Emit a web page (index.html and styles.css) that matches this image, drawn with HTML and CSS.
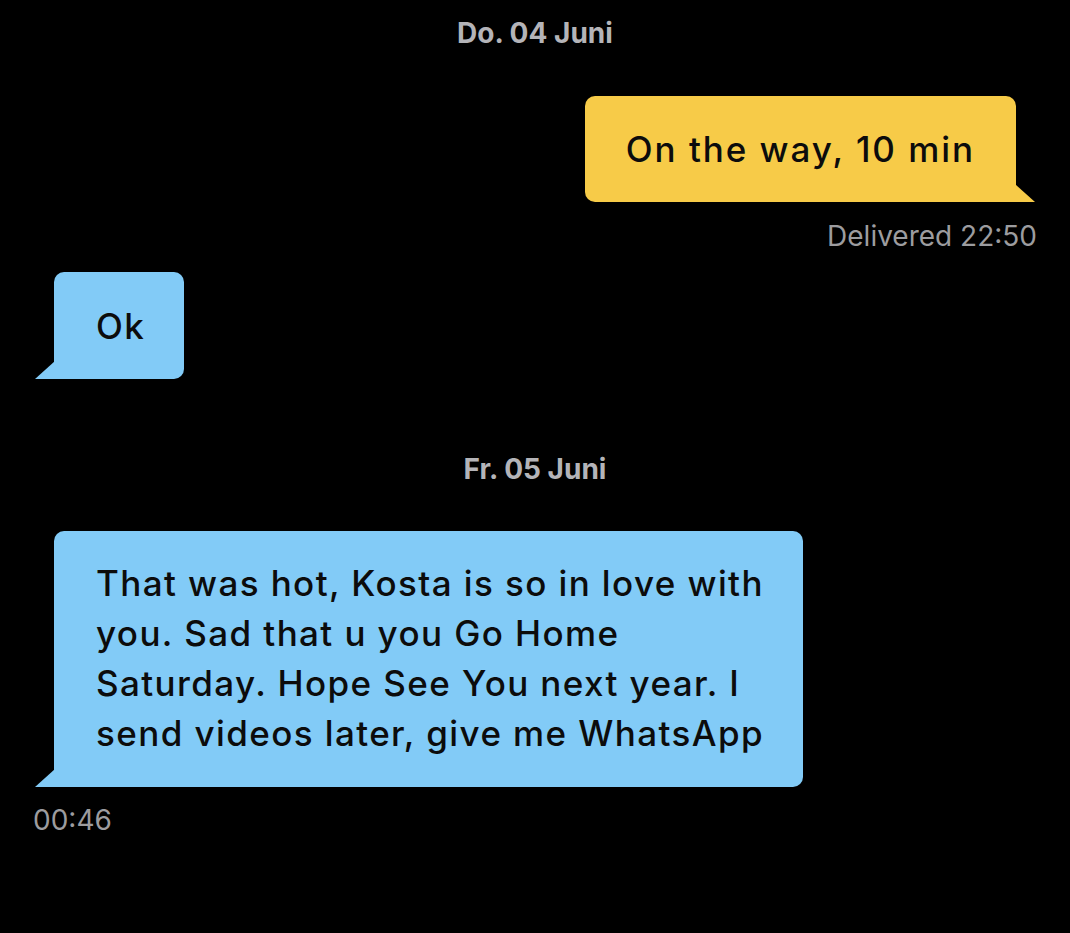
FILE: index.html
```html
<!DOCTYPE html>
<html lang="de">
<head>
<meta charset="utf-8">
<title>Chat</title>
<link rel="stylesheet" href="styles.css">
</head>
<body>
<main class="chat">
  <div class="day">Do. 04 Juni</div>

  <div class="msg msg-out">
    <div class="bubble bubble-out">On the way, 10 min</div>
    <div class="meta meta-out">Delivered 22:50</div>
  </div>

  <div class="msg msg-in">
    <div class="bubble bubble-in bubble-short">Ok</div>
  </div>

  <div class="day day-second">Fr. 05 Juni</div>

  <div class="msg msg-in">
    <div class="bubble bubble-in bubble-long">That was hot, Kosta is so in love with<br>you. Sad that u you Go Home<br>Saturday. Hope See You next year. I<br>send videos later, give me WhatsApp</div>
    <div class="meta meta-in">00:46</div>
  </div>
</main>
</body>
</html>
```

FILE: styles.css
```css
html, body {
  margin: 0;
  padding: 0;
  background: #000;
}

body {
  width: 1070px;
  height: 933px;
  overflow: hidden;
  font-family: "Inter", "Open Sans", "DejaVu Sans", sans-serif;
  color: #0c0c0c;
}

.chat {
  display: flex;
  flex-direction: column;
  padding: 16px 0 0;
}

.day {
  align-self: center;
  color: #b4b4b8;
  font-weight: 700;
  font-size: 28px;
  line-height: 34px;
}

.day-second {
  margin-top: 73px;
}

.msg {
  display: flex;
  flex-direction: column;
}

.msg-out {
  align-items: flex-end;
  padding-right: 54px;
  margin-top: 46px;
}

.msg-in {
  align-items: flex-start;
  padding-left: 54px;
}

.bubble {
  position: relative;
  border-radius: 10px;
  box-sizing: border-box;
  font-size: 35px;
  font-weight: 500;
  letter-spacing: 1.4px;
}

/* speech tails drawn as small triangles hanging off the bottom corner */
.bubble::after {
  content: "";
  position: absolute;
  bottom: 0;
  width: 20px;
  height: 18px;
}

.bubble-out {
  background: #f7cb48;
  border-bottom-right-radius: 0;
  height: 106px;
  padding: 0 41px;
  display: flex;
  align-items: center;
  letter-spacing: 1.95px;
}

.bubble-out::after {
  right: -19px;
  background: #f7cb48;
  clip-path: polygon(0 0, 100% 100%, 0 100%);
}

.bubble-in {
  background: #82cbf7;
  border-bottom-left-radius: 0;
}

.bubble-in::after {
  left: -19px;
  background: #82cbf7;
  clip-path: polygon(100% 0, 100% 100%, 0 100%);
}

.bubble-short {
  margin-top: 19px;
  width: 130px;
  height: 107px;
  padding: 0 42px;
  display: flex;
  align-items: center;
}

.bubble-long {
  margin-top: 45px;
  width: 749px;
  height: 256px;
  padding: 27px 10px 0 42px;
  line-height: 50px;
}

.meta {
  color: #9c9c9f;
  font-size: 28px;
  line-height: 34px;
}

.meta-out {
  margin-top: 17px;
  margin-right: -21px;
}

.meta-in {
  margin-top: 16px;
  margin-left: -21px;
}
```
